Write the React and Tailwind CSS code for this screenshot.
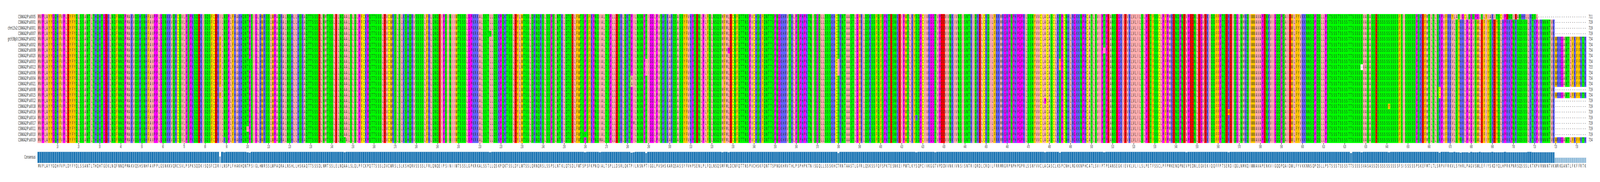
const CONS =
  "MVPLAYYGQHFVPLDYFYQLSSANTLTHQHTGEKLNQFNNQPMAKVQSHSNHFAVPPLGSNKKVQRCSVLPSPKSQDKISQSFCDR" +
  "ILNSPLFHAKHQNTPSIGLHWRSSLWPAQRALNSHLLHSKAQTTSSSDLNMTSSLELNQAALSLQLPFCKPQTTSSSLDVCWRSLSL" +
  "KSHQRVSSSSLFRLQNQEIPSINIIWTSSSLGPKRKALSSTLLQSKPQKTSSLDYLWTSSLQRNQRSLSSPSLNTKLQTSDLFWTSPS" +
  "FKPNQIALTSPLLDSRLQKTPILNSNPTIGGLPVSHSKARQSASSYFVHPSENLPLFQLNSQSMFMLDCNFQTTNSPVCHSKFQNTT" +
  "SPNGKHRVTHLPSPHPKTNISGQLLSSSKHCTRNTAASTLGFRLQSKSSFQFSPKTESNKEIPWTLKYSQPCIVKGGTVPDDVVNKI" +
  "VNSISNTRIQRDLCRQILFRRMRGRPNPHPGPRLSSNYVVCLACASCLKSPCNHLRGKKNPHCATLSVIPTPEANSEGKIEVKLVLIL" +
  "SLPETFSSCLPFPMKENQPNEVPEDNLEGVEKIQQFFPTSERDIQGLNMKQIWWAVAPENKVIGQQPQAIDWLFYVKKNNSQPQSLL" +
  "PSTSSSTSSSSTTSSSSSVASASSD" + "SSSSSSSSSS" + "FSI" + "SSSSS" +
  "PSKEFMTLTLSRPVFRKVLSYHRLPAGVSWLEFIYSKDYQLHP" +
  "RKPNRSQSSSLKTKPVRNNNTVKWRKGANTLFKFFRTK";

const ROW0_TAIL = "RYLATIGCLQGSPGLSLYIAKITSCIPE" + "NQIEANHHLLKQSL";

const NAMES = [
  ["CSNKA2IP:a0005", 711],
  ["CSNKA2IP:a0001", 719],
  ["chm13v2:CSNKA2IP:a0001", 719],
  ["CSNKA2IP:a0007", 719],
  ["grch38p0:CSNKA2IP:a0002", 734],
  ["CSNKA2IP:a0002", 734],
  ["CSNKA2IP:a0009", 734],
  ["CSNKA2IP:a0020", 734],
  ["CSNKA2IP:a0003", 734],
  ["CSNKA2IP:a0013", 733],
  ["CSNKA2IP:a0006", 734],
  ["CSNKA2IP:a0004", 734],
  ["CSNKA2IP:a0021", 734],
  ["CSNKA2IP:a0008", 719],
  ["CSNKA2IP:a0015", 734],
  ["CSNKA2IP:a0012", 719],
  ["CSNKA2IP:a0018", 719],
  ["CSNKA2IP:a0016", 719],
  ["CSNKA2IP:a0014", 719],
  ["CSNKA2IP:a0017", 719],
  ["CSNKA2IP:a0011", 719],
  ["CSNKA2IP:a0010", 719],
  ["CSNKA2IP:a0019", 734],
];

const VARIANTS = [
  [87, "F", [4, 5, 6, 7, 8, 9, 10, 11, 12, 14]],
  [89, "K", [22]],
  [100, "I", [20]],
  [101, "S", [8, 9]],
  [146, "T", [22]],
  [215, "S", [3]],
  [260, "S", [21]],
  [267, "M", [22]],
  [282, "A", [11, 12]],
  [283, "M", [19]],
  [289, "I", [8, 9, 10]],
  [325, "I", [12]],
  [328, "P", [6]],
  [380, "I", [8, 9, 10]],
  [417, "R", [18]],
  [426, "S", [7]],
  [478, "P", [15]],
  [485, "Y", [8, 9]],
  [506, "I", [6]],
  [545, "A", [22]],
  [565, "W", [17]],
  [623, "S", [8, 9, 10]],
  [628, "-", [9]],
  [641, "Y", [16]],
  [665, "C", [13, 14]],
  [675, "N", [22]],
  [679, "V", [22]],
];

const ROWS = NAMES.map(([, end], r) => {
  const seq = CONS.split("");
  if (r === 0) ROW0_TAIL.split("").forEach((c, i) => (seq[669 + i] = c));
  VARIANTS.forEach(([col, ch, rows]) => {
    if (rows.includes(r)) seq[col - 1] = ch;
  });
  const realEnd = end === 733 ? 734 : end;
  for (let i = realEnd; i < seq.length; i++) seq[i] = "-";
  return seq;
});

const FRACTION = CONS.split("").map((_, i) => {
  const counts = {};
  ROWS.forEach((s) => {
    if (s[i] !== "-") counts[s[i]] = (counts[s[i]] || 0) + 1;
  });
  return Math.max(...Object.values(counts)) / ROWS.length;
});

const BG = {
  A: "bg-[#ffafaf]", I: "bg-[#ffafaf]", L: "bg-[#ffafaf]", M: "bg-[#ffafaf]", V: "bg-[#ffafaf]",
  F: "bg-[#ffc800]", W: "bg-[#ffc800]", Y: "bg-[#ffc800]",
  H: "bg-[#6464ff]", K: "bg-[#6464ff]", R: "bg-[#6464ff]",
  D: "bg-[#ff0000]", E: "bg-[#ff0000]",
  N: "bg-[#00ff00]", Q: "bg-[#00ff00]", S: "bg-[#00ff00]", T: "bg-[#00ff00]",
  G: "bg-[#ff00ff]", P: "bg-[#ff00ff]",
  C: "bg-[#ffff00]",
  "-": "bg-white",
};

const GRID = "grid w-[96.7949%] shrink-0 grid-cols-[repeat(734,minmax(0,1fr))]";
const SIDE = "w-[2.3548%] shrink-0";

function Letter({ ch }) {
  return <span className="inline-block scale-x-[calc(0.77*var(--k))] leading-none">{ch}</span>;
}

function Label({ children }) {
  return (
    <div className={`flex ${SIDE} items-center justify-end pr-[calc(10.5px*var(--k))]`}>
      <span className="inline-block origin-right scale-x-[calc(0.785*var(--k))] whitespace-nowrap">{children}</span>
    </div>
  );
}

export default function App() {
  // The browser window may be narrower than the 7644px design; every horizontal measure follows it.
  const k = window.innerWidth / 7644;
  return (
    <div
      style={{ "--k": k }}
      className="h-[467px] w-full overflow-hidden bg-white pt-[36px] font-['DejaVu_Sans',sans-serif] text-[12.6px] text-[#262626]"
    >
      <div className="flex flex-col">
        {ROWS.map((seq, r) => (
          <div key={r} className="flex h-[14.39px]">
            <Label>{NAMES[r][0]}</Label>
            <div className={GRID}>
              {seq.map((ch, i) => (
                <div key={i} className={`flex items-center justify-center ${BG[ch]}`}>
                  <Letter ch={ch} />
                </div>
              ))}
            </div>
            <div className="flex items-center pl-[calc(11.7px*var(--k))]">
              <span className="inline-block origin-left scale-x-[calc(0.785*var(--k))]">{NAMES[r][1]}</span>
            </div>
          </div>
        ))}
      </div>

      <div className="flex h-[22px]">
        <div className={SIDE} />
        <div className={GRID}>
          {FRACTION.map((_, i) => (
            <div key={i} className="flex flex-col items-center">
              {(i + 1) % 10 === 0 && (
                <>
                  <div className="h-[4px] w-px shrink-0 bg-[#262626]" />
                  <span className="mt-[1.5px] inline-block scale-x-[calc(0.68*var(--k))] whitespace-nowrap text-[10px] leading-[10px]">{i + 1}</span>
                </>
              )}
            </div>
          ))}
        </div>
      </div>

      <div className="flex h-[29px]">
        <Label>Consensus</Label>
        <div className={`${GRID} items-end`}>
          {FRACTION.map((f, i) => (
            <div
              key={i}
              className="border-r border-t border-r-[#8fbbdc] border-t-[#b9d2e6] bg-[#1f77b4]"
              style={{ height: `${29 * f}px`, opacity: f }}
            />
          ))}
        </div>
      </div>

      <div className="flex h-[16px] pt-[1px]">
        <div className={SIDE} />
        <div className={GRID}>
          {CONS.split("").map((ch, i) => (
            <div key={i} className="flex items-center justify-center">
              <Letter ch={ch} />
            </div>
          ))}
        </div>
      </div>
    </div>
  );
}
